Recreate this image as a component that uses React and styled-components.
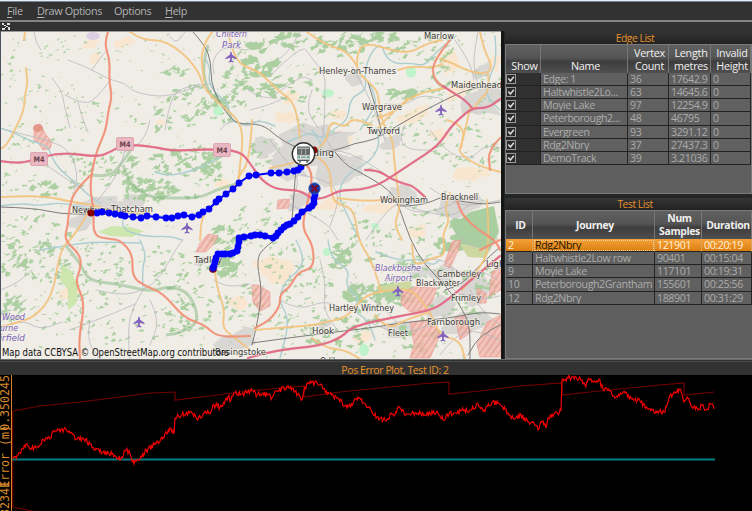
import React from "react";
import styled, { createGlobalStyle, css } from "styled-components";

const Global = createGlobalStyle`
  * { box-sizing: border-box; }
  html, body { margin: 0; background: #323232; overflow: hidden; }
  body { font-family: "Open Sans", "Noto Sans", sans-serif; font-size: 11px; }
`;

const Window = styled.div`
  width: 752px;
  height: 511px;
  display: flex;
  flex-direction: column;
  background: #323232;
  border-top: 1px solid #e8eef3;
`;
const MenuBar = styled.nav`
  height: 21px;
  flex: none;
  display: flex;
  gap: 14px;
  padding: 0 7px;
  border-top: 1px solid #73869a;
  border-bottom: 2px solid #848484;
  color: #b4b4b4;
  font-size: 10.8px;
  letter-spacing: -0.35px;
  line-height: 18px;
  u { text-underline-offset: 2px; }
`;
const MenuItem = styled.span`
  width: ${(p) => p.$w}px;
  white-space: nowrap;
`;
const ToolStrip = styled.div`
  height: 9px;
  flex: none;
  svg { display: block; margin-left: 2px; }
`;
const Workspace = styled.main`
  display: flex;
  height: 328px;
  flex: none;
  border-left: 1px solid #4d5262;
`;
const MapView = styled.section`
  width: 500px;
  height: 328px;
  border-top: 1px solid #9b9b98;
  flex: none;
  svg { display: block; }
`;
const Docks = styled.aside`
  flex: 1;
  display: flex;
  flex-direction: column;
  border-left: 3px solid #151616;
  padding-left: 1px;
  background: #242525;
`;
const DockTitle = styled.h2`
  margin: 0;
  height: ${(p) => p.$h}px;
  flex: none;
  color: #e8932b;
  font-size: 10.3px;
  font-weight: 400;
  letter-spacing: -0.45px;
  line-height: ${(p) => p.$h + 1}px;
  text-align: center;
  padding-left: 13px;
  background: linear-gradient(#343434, #222);
`;
const TableFrame = styled.div`
  height: ${(p) => p.$h}px;
  margin-bottom: ${(p) => p.$gap}px;
  flex: none;
  overflow: hidden;
  background: #5f5f5f;
  border: 1px solid #777b80;
  border-right-width: ${(p) => (p.$open ? 0 : 1)}px;
`;
const Row = styled.div`
  display: grid;
  grid-template-columns: ${(p) => p.$cols};
  height: 13.15px;
`;
const HeaderRow = styled(Row)`
  height: 28px;
`;
const HeaderCell = styled.div`
  display: flex;
  align-items: ${(p) => (p.$low ? "flex-end" : "center")};
  justify-content: center;
  padding: 0 0 ${(p) => (p.$low ? 1 : 0)}px 3px;
  text-align: center;
  color: #f0f0f0;
  font-size: ${(p) => (p.$bold ? 10.4 : 10.8)}px;
  font-weight: ${(p) => (p.$bold ? 700 : 500)};
  letter-spacing: ${(p) => (p.$bold ? -0.35 : -0.25)}px;
  line-height: 13px;
  white-space: pre;
  border-right: 1px solid #73777a;
  background: linear-gradient(#606060 0%, #555 45%, #3d3d3d 60%, #505050 100%);
`;
const Cell = styled.div`
  border-right: 1px solid #252525;
  border-bottom: 1px solid #222;
  padding-left: 2px;
  color: #acacac;
  background: ${(p) => (p.$dark ? "#303030" : "#606060")};
  line-height: 13px;
  font-size: 10.6px;
  letter-spacing: -0.38px;
  white-space: nowrap;
  overflow: hidden;
  ${(p) =>
    p.$selected &&
    css`
      color: #fff2db;
      background: linear-gradient(#f5a139, #dc7f12);
      border-right-color: #dba458;
    `}
  ${(p) => p.$focus && css`color: #221402; outline: 1px dotted #f7d098; outline-offset: -2px;`}
`;
const Check = styled.svg`
  display: block;
  margin: 1px 0 0 -2px;
`;
const PlotDock = styled.section`
  flex: 1;
  display: flex;
  flex-direction: column;
  border-top: 1px solid #686b6c;
`;
const PlotTitle = styled.h2`
  margin: 1px 0 0;
  height: 14px;
  flex: none;
  border-top: 1px solid #494a4a;
  color: #e8932b;
  font-size: 10.5px;
  font-weight: 400;
  letter-spacing: -0.4px;
  line-height: 16px;
  text-align: center;
  padding-left: 38px;
`;
const PlotCanvas = styled.svg`
  display: block;
  background: #000;
`;

const rng = (seed) => () => {
  seed = (seed * 1664525 + 1013904223) % 4294967296;
  return seed / 4294967296;
};

// Smooth path through a flat list of x,y pairs (midpoint quadratics).
const smooth = (str) => {
  const n = str.trim().split(/[ ,]+/).map(Number);
  const p = [];
  for (let i = 0; i < n.length; i += 2) p.push([n[i], n[i + 1]]);
  let d = `M${p[0]}`;
  for (let i = 1; i < p.length - 1; i++) {
    d += `Q${p[i]} ${(p[i][0] + p[i + 1][0]) / 2},${(p[i][1] + p[i + 1][1]) / 2}`;
  }
  return d + `L${p[p.length - 1]}`;
};

const blob = (r, cx, cy, rx, ry, rough = 0.6) => {
  const k = 11;
  const t = (r() - 0.7) * rough;
  let d = "";
  for (let i = 0; i < k; i++) {
    const a = (i / k) * Math.PI * 2;
    const q = 1.1 - r() * rough;
    const x = Math.cos(a) * rx * q;
    const y = Math.sin(a) * ry * q;
    d += `${i ? "L" : "M"}${(cx + x).toFixed(1)},${(cy + y + x * t).toFixed(1)}`;
  }
  return d + "Z";
};

// cx, cy, rx, ry, count, max patch size
const woods = [
  [60, 50, 25, 12, 10, 3], [12, 75, 12, 18, 7, 3], [50, 92, 40, 20, 18, 3], [90, 112, 25, 14, 10, 3.5],
  [150, 50, 30, 15, 5, 2.5], [176, 72, 12, 5, 10, 6], [165, 118, 35, 12, 22, 5], [190, 95, 25, 10, 16, 5],
  [235, 80, 14, 15, 22, 6], [222, 108, 26, 14, 28, 6], [240, 50, 10, 10, 8, 5], [262, 60, 16, 18, 12, 9],
  [283, 42, 30, 10, 18, 8], [262, 84, 15, 12, 14, 8], [335, 44, 30, 12, 22, 7], [375, 37, 25, 6, 15, 7],
  [300, 85, 30, 20, 20, 5], [320, 122, 40, 14, 14, 4], [402, 94, 13, 8, 10, 8], [425, 48, 40, 13, 34, 5],
  [435, 80, 20, 25, 20, 4], [485, 95, 18, 30, 20, 3.5], [410, 125, 50, 20, 28, 3.5], [465, 150, 34, 24, 34, 4],
  [40, 140, 35, 20, 20, 3.5], [47, 190, 16, 8, 16, 6], [88, 170, 30, 22, 32, 4.5], [20, 180, 20, 12, 14, 3],
  [130, 175, 14, 25, 18, 6], [152, 191, 24, 10, 26, 7], [186, 160, 35, 16, 44, 6], [213, 167, 12, 14, 16, 6],
  [180, 182, 45, 17, 24, 4], [35, 238, 35, 24, 50, 4.5], [12, 260, 13, 18, 14, 5], [42, 264, 25, 22, 32, 4.5],
  [13, 306, 14, 15, 18, 7], [60, 300, 30, 35, 42, 3.5], [100, 270, 34, 30, 44, 4], [130, 325, 50, 24, 38, 3.5],
  [174, 265, 28, 25, 30, 4], [185, 306, 28, 30, 40, 4.5], [225, 265, 15, 13, 18, 9], [228, 240, 18, 15, 18, 7],
  [250, 225, 30, 20, 28, 4], [240, 303, 25, 18, 22, 4.5], [285, 265, 20, 26, 25, 4], [310, 300, 25, 34, 42, 3.5],
  [343, 256, 16, 14, 14, 9], [358, 293, 14, 10, 16, 9], [392, 294, 26, 10, 26, 10], [408, 250, 25, 18, 24, 4],
  [370, 230, 25, 15, 18, 4], [425, 220, 30, 14, 18, 4], [475, 225, 19, 14, 24, 12], [465, 246, 30, 8, 18, 9],
  [360, 322, 22, 12, 20, 5], [340, 340, 34, 14, 28, 5], [418, 335, 22, 18, 28, 6], [465, 300, 34, 30, 38, 5],
  [488, 285, 12, 18, 13, 6], [290, 330, 25, 18, 18, 3.5], [405, 265, 40, 12, 14, 5], [262, 154, 12, 14, 14, 4],
];
const r0 = rng(71);
const woodPath = woods
  .map(([cx, cy, rx, ry, n, s]) =>
    Array.from({ length: n }, () => {
      const a = r0() * 6.283;
      const q = Math.sqrt(r0());
      return blob(r0, cx + Math.cos(a) * q * rx, cy + Math.sin(a) * q * ry, s * (0.4 + r0() * 0.7), s * (0.25 + r0() * 0.45), 0.95);
    }).join("")
  )
  .join("");
const scatterPath = Array.from({ length: 560 }, () =>
  blob(r0, r0() * 502, 32 + r0() * 330, 0.7 + r0() * 2.2, 0.6 + r0() * 1.1, 0.8)
).join("");

const towns = [
  [310, 145, 46, 24], [338, 172, 28, 20], [290, 170, 20, 14], [262, 147, 14, 12], [100, 206, 28, 9], [80, 222, 15, 10],
  [130, 202, 14, 7], [480, 104, 25, 15], [457, 208, 24, 14], [400, 195, 19, 11], [482, 72, 10, 8], [475, 290, 18, 20],
  [440, 308, 16, 13], [465, 325, 26, 14], [235, 342, 25, 13], [400, 330, 18, 9], [353, 80, 11, 7], [391, 142, 13, 8],
  [440, 275, 16, 9], [420, 272, 13, 6], [322, 326, 7, 4], [300, 200, 16, 10], [493, 345, 9, 12], [200, 262, 9, 5],
];
const farms = [
  [90, 44, 13, 6], [125, 42, 12, 7], [95, 58, 6, 8], [275, 268, 24, 18], [420, 112, 12, 11], [448, 62, 15, 13],
  [458, 92, 18, 11], [470, 175, 19, 9], [410, 118, 15, 8], [225, 185, 13, 7], [330, 205, 18, 8], [68, 292, 12, 8],
  [440, 134, 10, 9], [290, 97, 9, 9], [337, 114, 10, 6], [240, 303, 13, 9], [346, 137, 12, 8], [285, 118, 15, 8],
  [380, 208, 18, 7], [160, 122, 6, 4], [495, 62, 8, 12], [416, 232, 12, 8], [365, 336, 12, 6],
];
const r1 = rng(9);
const townPath = towns.map((t) => blob(r1, ...t) + blob(r1, t[0] + 3, t[1] - 2, t[2] * 0.9, t[3] * 0.9)).join("");
const farmPath = farms.map((t) => blob(r1, ...t)).join("");

const lanes = [
  "34,32 36,42 41,50", "68,60 85,66 110,80 125,83 133,92 165,98 200,85 210,84", "52,78 62,90 64,105 70,128",
  "65,95 85,106 98,96 108,83", "78,102 82,118 88,132", "165,130 170,98 182,88 200,84", "92,70 102,55 108,50",
  "170,36 175,45 185,32", "245,50 225,44 212,60 214,74", "270,76 302,44 310,56 322,70 325,80", "312,90 305,108 318,128",
  "0,128 25,135 48,140 70,150 78,175 74,190", "125,150 120,172 98,200", "150,120 146,140 125,152", "40,160 60,175 84,190",
  "96,290 120,296 145,290 162,275 175,250 183,240", "145,287 130,310 128,340 130,359", "150,300 160,320 150,345",
  "250,284 230,288 214,280", "70,330 110,315 135,304", "90,320 86,340 100,359", "352,67 367,92 378,120 385,140",
  "325,80 325,130 319,150", "478,32 472,60 478,85", "455,40 470,62 474,80", "310,152 335,148 365,160 390,178",
  "302,175 330,180 340,198 330,226", "290,205 325,220 338,240", "430,188 455,205 478,205 500,200",
  "366,240 375,225 398,200 410,212 435,212 460,200", "405,205 445,220 470,205", "320,260 326,280 323,310 338,331",
  "280,300 298,311 325,300 345,310", "350,282 382,306 398,324", "365,320 385,330 405,333 425,327 440,320",
  "420,260 440,256 460,275 480,270 498,280", "470,290 480,310 500,325", "440,355 455,335 475,330 500,340",
  "385,104 405,106 420,95 440,98", "430,130 445,152 470,160 485,145 500,148", "405,125 398,140 410,150 430,150",
  "455,230 465,245 490,250", "275,95 300,75 312,80", "250,110 270,105 288,96", "248,90 258,97 275,98",
  "220,130 230,118 246,128 260,120", "300,32 290,50 278,60", "0,290 15,285 32,270", "0,330 20,318 40,330 62,322",
  "270,140 285,160 300,178 292,200", "322,128 330,150 345,160", "300,130 318,140 340,132", "425,265 450,290 478,300 500,296",
];
const streams = [
  "0,128 15,133 28,140 48,146 52,158 60,170 75,182 88,195 100,203", "0,206 20,203 40,206 62,202 92,210 120,212 150,216 185,217 210,210 220,198",
  "125,213 118,228 145,237 170,236 182,240", "155,172 165,176 185,173 205,166 225,154", "143,287 142,270 146,255 140,240",
  "205,58 211,68 208,82 218,96 228,102 230,118 242,126 260,120 275,126", "288,142 312,130 322,140 335,128 348,120 350,98 367,90 364,72 372,50 382,44 385,56 395,64 410,63 425,66 436,52 456,36",
  "495,36 497,60 490,75 485,95 500,110", "360,240 352,225 345,210 338,195 345,175 370,162 380,145 376,128", "296,240 304,255 300,270 286,280 278,300 290,320 280,358",
  "328,240 330,258 350,270 345,285 360,300 352,310 368,320 375,340", "376,252 400,262 420,258 432,266 440,260", "312,130 325,148 316,158",
  "40,250 80,243 105,242 140,243", "370,85 378,100 370,115 360,130",
];
const orange = [
  "25,32 24,40", "26,68 28,82 25,94 24,110 16,128 6,146 0,149", "130,32 142,40 160,40 175,47 190,60 200,75 203,86 212,97 225,108 240,122 243,140 240,165 238,185",
  "212,32 200,48 204,80", "228,32 232,50 240,64 250,68 262,74 277,90 292,100 298,118 300,138", "307,32 325,45 345,50 357,65 360,75 378,90 379,107 383,124 393,140 394,160 398,190 400,210 394,224 402,240",
  "357,65 357,50 368,43 390,50 410,53 428,43 442,40", "398,70 410,66 432,68 442,64", "378,128 394,110 418,93 446,88", "378,118 395,112 408,98",
  "480,32 484,50 492,65 488,74 470,72 450,62 440,59", "470,108 462,145 458,152 476,165 500,172", "447,120 465,125 461,148", "488,74 490,90 480,99 474,108",
  "0,197 40,195 72,202 94,205 115,212 150,213", "92,206 84,220 72,238 60,250 53,295 35,317 15,323 0,327", "235,185 222,198 202,213 200,240",
  "215,270 216,285 225,310 222,328 235,338 250,350", "270,168 295,163 302,157 326,145 330,120 345,128 352,118 372,125", "316,156 330,165 331,190 335,204 354,208 358,240 370,258 378,280 381,292",
  "255,330 290,327 315,325 325,322 345,318 356,306 368,294 390,290 412,289 427,308", "312,338 325,348 345,350 360,359", "450,193 444,208 450,220 442,235 446,255 432,258 414,267 412,244",
  "375,315 387,330 405,320 430,312", "430,312 437,335 460,340 465,359", "487,200 490,245 482,265 462,290", "338,198 365,202 398,198", "252,120 250,160 238,178",
];
const trunk = [
  "108,32 104,43 110,60 109,80 112,97 108,112 106,130 97,150 92,170 90,190 94,210 93,236 110,239 120,240 133,254 132,277 145,286 163,293 184,318 205,325 217,337 250,336",
  "91,175 75,190 69,208 68,225 64,240 80,254 81,268 75,282 85,302 79,337 80,359", "301,160 312,168 311,190 304,215 303,230 313,245 314,268 298,272 290,287 280,294 280,306 270,320 255,328",
  "450,40 432,62 434,80 445,88", "457,200 460,213 478,230 495,240 500,250", "480,250 500,240", "500,138 488,150 490,170",
];
const motorway = [
  "0,161 12,163 28,162 60,152 98,157 110,152 125,144 155,147 172,151 210,149 240,151 250,163 262,181 278,190 300,190 312,199 325,198 340,190 360,190 378,185 391,177 412,163 438,146 450,128 460,118 472,108 488,108 500,99",
  "365,170 378,170 391,179 405,184 413,186 425,197", "443,86 455,94 465,100 473,109", "248,358 275,350 320,346 342,337 353,326 400,316 433,310 450,298 465,285 500,256",
];
const rail = [
  "193,32 205,45 211,62 211,82 218,100 228,115 237,124 262,124 275,135 290,145 310,152 335,151 355,143 375,140 395,127 425,110 455,95 470,89 500,84",
  "335,152 345,165 360,172 390,190 399,206 410,240 425,265 445,285 460,305 470,325 470,359", "0,207 35,208 60,214 92,214",
  "296,167 292,220", "275,240 260,250 257,265 262,290 258,320 252,345", "252,343 310,335 370,328 400,323 450,318 480,312 500,314",
  "368,82 378,115 381,130", "398,206 420,206 440,198", "455,200 480,205 500,202", "500,247 480,265 462,284 445,290", "500,325 480,335 468,355",
];
const routeA =
  "92,213 97,213 102,212 109,213 115,214 121,215 125,216 133,217 141,218 147,216 156,217 166,218 172,218 178,216 184,215 192,217 199,215 203,212 209,209 216,202 219,199 226,194 233,189 239,183 249,176 256,175 271,173 279,173 287,172 294,171 298,170 301,167";
const routeB =
  "314,188 315,195 314,199 314,203 312,206 309,208 302,212 298,217 294,221 290,224 287,225 284,227 281,230 278,233 276,236 273,238 265,236 260,235 255,235 251,236 244,237 239,238 239,242 238,247 237,251 233,253 230,254 225,254 222,254 218,254 216,258 215,262 214,266 213,268";

const pairs = (s) => s.split(" ").map((p) => p.split(",").map(Number));

function Route({ points, width = 2 }) {
  return (
    <g fill="#0000fb">
      <polyline points={points} fill="none" stroke="#0000fb" strokeWidth={width} />
      {pairs(points).slice(1).map(([x, y]) => <circle key={`${x}-${y}`} cx={x} cy={y} r="3.4" />)}
    </g>
  );
}

const places = [
  ["Marlow", 424, 38.5, 30], ["Henley-on-Thames", 319, 74, 77], ["Maidenhead", 451, 88, 51], ["Wargrave", 362, 110, 40],
  ["Twyford", 367, 134, 33], ["Reading", 295, 156, 39], ["Wokingham", 380, 203, 48], ["Bracknell", 441, 200, 37],
  ["Newbury", 72, 213, 36], ["Thatcham", 111, 212, 42], ["Tadley", 194, 263, 28], ["Camberley", 437, 277, 44],
  ["Blackwater", 416, 286, 44], ["Frimley", 451, 301, 30], ["Light", 486, 267, 22], ["Hartley Wintney", 329, 311, 65],
  ["Farnborough", 427, 325, 53], ["Hook", 312, 334, 22], ["Fleet", 388, 336, 20], ["Basingstoke", 215, 355, 51], ["Odiham", 320, 364, 30],
];
const airLabels = [
  ["Chiltern", 216, 37, 31], ["Park", 222, 48, 19], ["Blackbushe", 375, 271, 46], ["Airport", 385, 281, 27],
  ["Wood", 2, 320, 23], ["burne", -5, 331, 23], ["Fairfield", -11, 341, 36],
];
const planes = [[231, 57], [441, 110], [187, 228], [139, 322], [398, 291], [443, 336]];
const military = [
  "34,127 40,124 46,135 52,142 50,149 43,150 39,144 34,140", "208,234 218,236 214,244 206,252 196,252 200,243",
  "252,285 258,285 270,292 270,306 260,311 253,302", "402,292 415,287 437,288 432,302 425,310 410,312 401,304",
  "278,200 290,199 288,208 277,209", "452,242 460,241 456,255 450,268 444,265", "410,322 434,319 440,335 430,358 410,358 414,344",
  "487,322 501,315 501,357 480,357 477,344", "492,272 501,267 501,290 489,296", "453,241 461,240 458,252 446,262",
  "455,318 464,315 471,332 460,340", "477,288 487,294 486,303 478,303",
];

function Lines({ list, color, width, casing }) {
  return (
    <g fill="none" strokeLinecap="round" strokeLinejoin="round">
      {casing && list.map((l) => <path key={"c" + l} d={smooth(l)} stroke={casing} strokeWidth={width + 0.7} opacity="0.4" />)}
      {list.map((l) => <path key={l} d={smooth(l)} stroke={color} strokeWidth={width} />)}
    </g>
  );
}

function CountyMap() {
  return (
    <svg width="500" height="327" viewBox="1 32 500 327">
      <defs>
        <pattern id="hatch" width="5" height="5" patternUnits="userSpaceOnUse" patternTransform="rotate(35)">
          <rect width="5" height="5" fill="#f3bdb3" />
          <rect width="1.6" height="5" fill="#ea978c" />
        </pattern>
      </defs>
      <rect x="1" y="32" width="500" height="327" fill="#f0ede6" />
      <path d={farmPath} fill="#f9e6d0" />
      <path d={townPath} fill="#d9d7d4" />
      <ellipse cx="93" cy="36" rx="7" ry="4" fill="#ddcfe2" />
      <path d={woodPath} fill="#a6cd9c" opacity="0.95" />
      <path d={scatterPath} fill="#b2d2a8" opacity="0.85" />
      <path d="M98,232L112,226 130,227 144,231 132,237 110,236Z M62,265L70,270 78,284 76,304 68,310 68,290 60,280Z" fill="#c7e5a4" opacity="0.85" />
      <g fill="#bff3c9">
        <ellipse cx="411" cy="72" rx="5" ry="5.5" /><ellipse cx="328" cy="93" rx="6" ry="4" />
        <ellipse cx="218" cy="111" rx="5" ry="4.5" /><ellipse cx="364" cy="350" rx="5" ry="6" />
        <ellipse cx="327" cy="252" rx="4" ry="4" /><ellipse cx="375" cy="226" rx="4" ry="3" />
      </g>
      <path d="M451,226L470,212 494,206 499,232 490,250 462,244Z" fill="#a9cfa0" />
      <path d="M460,244L490,249 486,258 468,257Z M376,287L412,280 410,290 380,292Z" fill="#cdd8a0" />
      <g stroke="#8ebb8b" strokeWidth="3" fill="none" opacity="0.55">
        <path d={smooth("208,45 202,65 207,90 218,102 228,108 232,122")} />
        <path d={smooth("123,165 128,180 138,190 150,197 170,198 200,198 216,190 236,184")} />
        <path d={smooth("66,246 80,262 88,281 120,284 150,292 170,286 190,293 200,322 180,333 166,335")} />
        <path d={smooth("92,175 110,178 124,160 132,148")} />
        <path d={smooth("432,75 442,90 450,82")} />
      </g>
      <g fill="url(#hatch)" stroke="#ea9088" strokeWidth="0.7" opacity="0.8">
        {military.map((m) => <polygon key={m} points={m} />)}
      </g>
      <ellipse cx="38" cy="128" rx="5" ry="4" fill="#e18778" opacity="0.7" />
      <g opacity="0.85"><Lines list={lanes} color="#b9b8be" width={0.9} /></g>
      <Lines list={streams} color="#acced1" width={1.4} />
      <Lines list={rail} color="#7c7c79" width={1} />
      <Lines list={orange} color="#f5c680" width={1.4} casing="#e8b06a" />
      <Lines list={trunk} color="#f39278" width={1.7} casing="#e58468" />
      <Lines list={motorway} color="#e36c86" width={1.8} casing="#d25e78" />
      {[[39, 159], [125, 144], [222, 150]].map(([x, y]) => (
        <g key={x}>
          <rect x={x - 8.5} y={y - 6.5} width="17" height="13" rx="1.5" fill="#e9b7c2" stroke="#d597a6" strokeWidth="0.7" />
          <text x={x - 5.5} y={y + 3} fontFamily="DejaVu Sans" fontWeight="700" fontSize="7.6" textLength="11" lengthAdjust="spacingAndGlyphs" fill="#6b3f4a">M4</text>
        </g>
      ))}
      <g fill="#8263bd">
        {planes.map(([x, y]) => (
          <path key={x} transform={`translate(${x} ${y})`} d="M0,-5.5Q1,-5 1,-2.5L5.5,1V2.2L1,.8 .8,3.4 2.4,4.6V5.5L0,4.9 -2.4,5.5V4.6L-.8,3.4 -1,.8 -5.5,2.2V1L-1,-2.5Q-1,-5 0,-5.5Z" />
        ))}
      </g>
      <g fontFamily="DejaVu Sans, sans-serif" fontSize="8.8" stroke="#f3f0e9" strokeOpacity="0.7" strokeWidth="1.6" paintOrder="stroke">
        <g fill="#3c3b3a">
          {places.map(([t, x, y, w]) => <text key={t} x={x} y={y} textLength={w} lengthAdjust="spacingAndGlyphs">{t}</text>)}
        </g>
        <g fill="#7b62b6" fontStyle="italic">
          {airLabels.map(([t, x, y, w]) => <text key={t} x={x} y={y} textLength={w} lengthAdjust="spacingAndGlyphs">{t}</text>)}
        </g>
      </g>
      <circle cx="213" cy="269" r="3.8" fill="#850010" />
      <Route points={routeA} />
      <Route points={routeB} width={4} />
      <circle cx="91" cy="213" r="3.5" fill="#820000" />
      <circle cx="314" cy="150" r="3.5" fill="#820000" />
      <circle cx="314.5" cy="188.5" r="5.6" fill="#183b9f" stroke="#2853b7" />
      <path d="M311.5,185.5l6,6M317.5,185.5l-6,6" stroke="#7a0830" strokeWidth="2.4" />
      <circle cx="303.5" cy="154" r="11.2" fill="#fff" stroke="#303030" strokeWidth="1.4" />
      <g fill="#66696a">
        <rect x="297" y="146.5" width="13" height="8.5" rx="1" />
        <path d="M297.5,155h12v4.3h-12z" fill="#dde5e2" stroke="#8a9190" strokeWidth="0.6" />
        <path d="M298,148.3h11" stroke="#dfe3e3" strokeWidth="0.8" />
        <path d="M301.4,149.5v5M305.6,149.5v5" stroke="#c6cacb" strokeWidth="0.7" />
        <path d="M297.5,160.5h12" stroke="#4f5252" strokeWidth="1.2" />
        <rect x="299" y="160.5" width="1.8" height="2.3" /><rect x="306.3" y="160.5" width="1.8" height="2.3" />
        <rect x="301" y="156.4" width="5" height="1.6" fill="#8ea39a" />
        <circle cx="299" cy="157.2" r="1.1" fill="#4eac79" /><circle cx="308" cy="157.2" r="1.1" fill="#4eac79" />
      </g>
      <text x="2" y="356" fontFamily="DejaVu Sans, sans-serif" fontSize="9.6" textLength="227" lengthAdjust="spacingAndGlyphs" fill="#111">
        Map data CCBYSA © OpenStreetMap.org contributors
      </text>
    </svg>
  );
}

// Error trace anchors: x, y.
const trace = [
  [13, 459], [18, 455], [26, 444], [29, 447], [36, 448], [43, 440], [50, 439], [53, 431], [60, 432], [64, 429], [70, 433], [76, 439],
  [84, 439], [90, 444], [94, 450], [103, 452], [112, 454], [121, 459], [126, 450], [130, 454], [134, 464], [138, 460], [141, 456],
  [148, 449], [156, 444], [163, 437], [170, 428], [174, 434], [175, 418], [182, 415], [192, 413], [197, 419], [206, 413], [211, 411],
  [214, 405], [220, 407], [228, 397], [231, 400], [234, 393], [242, 394], [252, 390], [257, 395], [263, 393], [272, 398], [276, 391],
  [289, 388], [295, 391], [302, 400], [305, 387], [312, 382], [320, 385], [330, 394], [338, 398], [347, 408], [358, 397], [366, 405],
  [377, 417], [386, 421], [391, 413], [394, 416], [399, 407], [406, 414], [418, 413], [430, 414], [437, 411], [443, 420], [449, 414],
  [458, 411], [470, 410], [478, 404], [484, 410], [492, 402], [500, 404], [508, 413], [514, 419], [521, 415], [528, 422], [534, 423],
  [538, 430], [542, 422], [546, 428], [548, 418], [554, 414], [561, 411], [562, 380], [568, 378], [576, 377], [582, 380], [585, 385],
  [590, 379], [596, 382], [599, 379], [603, 389], [611, 391], [615, 398], [625, 393], [632, 399], [640, 401], [648, 409], [656, 411],
  [664, 412], [670, 395], [675, 393], [680, 389], [684, 402], [687, 397], [692, 407], [698, 410], [702, 405], [706, 410], [711, 404], [714, 409],
];
const r2 = rng(33);
const tracePts = [];
trace.forEach(([x, y], i) => {
  if (!i) return tracePts.push([x, y]);
  const [px, py] = trace[i - 1];
  const n = Math.max(1, Math.round((x - px) / 0.9));
  for (let k = 1; k <= n; k++) {
    tracePts.push([px + ((x - px) * k) / n, py + ((y - py) * k) / n + (k < n ? (r2() - 0.5) * 5.5 : 0)]);
  }
});

function ErrorPlot() {
  return (
    <PlotCanvas width="752" height="136" viewBox="0 375 752 136">
      <g fontFamily="DejaVu Sans Mono, monospace" fontSize="11.6" fill="#d78a2c">
        <text transform="translate(9 375) rotate(-90)" textAnchor="end">0.350245</text>
        <text transform="translate(9 425) rotate(-90)" textAnchor="end">Error (m)</text>
        <text transform="translate(9 481) rotate(-90)" textAnchor="end">-0.82341</text>
      </g>
      <path d="M11.5,375V511" stroke="#db832a" />
      <path d="M12.7,411V507L36,512" stroke="#820000" fill="none" />
      <path
        d="M13,411L40,406 80,402 120,397 150,393 175,392V400L210,396 240,392 270,389 304,386V397L340,392 380,388 420,384 449,382V394L480,391 520,386 562,383V395L590,392 630,388 660,385 684,383V395L714,392"
        stroke="#700000" strokeWidth="1.2" fill="none"
      />
      <path d="M12,459.5H715" stroke="#008084" strokeWidth="2" />
      <polyline points={tracePts.map((p) => p.map((v) => v.toFixed(1)).join()).join(" ")} fill="none" stroke="#f00000" strokeWidth="1.2" />
    </PlotCanvas>
  );
}

const edgeCols = "35px 87px 41px 42px 1fr";
const edges = [
  ["Edge: 1", "36", "17642.9"], ["Haltwhistle2Lo...", "63", "14645.6"], ["Moyie Lake", "97", "12254.9"],
  ["Peterborough2...", "48", "46795"], ["Evergreen", "93", "3291.12"], ["Rdg2Nbry", "37", "27437.3"], ["DemoTrack", "39", "3.21036"],
];
const testCols = "27px 122px 47px 1fr";
const tests = [
  ["2", "Rdg2Nbry", "121901", "00:20:19"], ["8", "Haltwhistle2Low row", "90401", "00:15:04"], ["9", "Moyie Lake", "117101", "00:19:31"],
  ["10", "Peterborough2Grantham", "155601", "00:25:56"], ["12", "Rdg2Nbry", "188901", "00:31:29"],
];

export default function App() {
  return (
    <Window>
      <Global />
      <MenuBar>
        <MenuItem $w={16}><u>F</u>ile</MenuItem>
        <MenuItem $w={63}><u>D</u>raw Options</MenuItem>
        <MenuItem $w={37}>Options</MenuItem>
        <MenuItem $w={24}><u>H</u>elp</MenuItem>
      </MenuBar>
      <ToolStrip>
        <svg width="8" height="8" viewBox="0 0 8 8">
          <path d="M0,1h2v2H0zM5,1h3v2H5zM2,3h2v1H2zM4,4h2v1H4zM0,6h3v2H0zM6,5h2v3H6zM3,5h1v1H3z" fill="#ddd" />
        </svg>
      </ToolStrip>
      <Workspace>
        <MapView><CountyMap /></MapView>
        <Docks>
          <DockTitle $h={13}>Edge List</DockTitle>
          <TableFrame $h={150} $gap={4}>
            <HeaderRow $cols={edgeCols}>
              {["Show", "Name", "Vertex\nCount", "Length\nmetres", "Invalid\nHeight"].map((h) => <HeaderCell key={h} $low>{h}</HeaderCell>)}
            </HeaderRow>
            {edges.map((e) => (
              <Row key={e[0]} $cols={edgeCols}>
                <Cell $dark>
                  <Check width="10" height="10" viewBox="0 0 10 10">
                    <rect x=".5" y=".5" width="9" height="9" fill="#2a2a2a" stroke="#999" />
                    <path d="M2.3,4.5L4.4,7 7.8,2.7" fill="none" stroke="#ddd" strokeWidth="1.5" />
                  </Check>
                </Cell>
                {e.map((v) => <Cell key={v}>{v}</Cell>)}
                <Cell>0</Cell>
              </Row>
            ))}
          </TableFrame>
          <DockTitle $h={12}>Test List</DockTitle>
          <TableFrame $h={149} $gap={0} $open>
            <HeaderRow $cols={testCols}>
              {["ID", "Journey", "Num\nSamples", "Duration"].map((h) => <HeaderCell key={h} $bold>{h}</HeaderCell>)}
            </HeaderRow>
            {tests.map((t, i) => (
              <Row key={t[0]} $cols={testCols}>
                {t.map((v, c) => <Cell key={c} $selected={i === 0} $focus={i === 0 && c === 1}>{v}</Cell>)}
              </Row>
            ))}
          </TableFrame>
        </Docks>
      </Workspace>
      <PlotDock>
        <PlotTitle>Pos Error Plot, Test ID: 2</PlotTitle>
        <ErrorPlot />
      </PlotDock>
    </Window>
  );
}
